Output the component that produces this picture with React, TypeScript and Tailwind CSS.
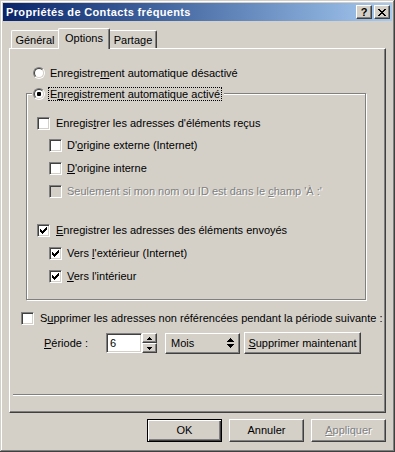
import React from "react";

const raised =
  "border border-t-white border-l-white border-r-[#404040] border-b-[#404040] shadow-[inset_-1px_-1px_0_#808080] bg-[#d4d0c8]";

function CheckMark() {
  return (
    <svg width="7" height="7" viewBox="0 0 7 7" shapeRendering="crispEdges">
      <path
        d="M0 2h1v3H0z M1 3h1v3H1z M2 4h1v3H2z M3 3h1v3H3z M4 2h1v3H4z M5 1h1v3H5z M6 0h1v3H6z"
        fill="#000"
      />
    </svg>
  );
}

function Check({ checked = false, disabled = false }: { checked?: boolean; disabled?: boolean }) {
  return (
    <div
      className={
        "w-[13px] h-[13px] shrink-0 border border-t-[#808080] border-l-[#808080] border-r-white border-b-white shadow-[inset_1px_1px_0_#404040,inset_-1px_-1px_0_#d4d0c8] flex items-center justify-center " +
        (disabled ? "bg-[#d4d0c8]" : "bg-white")
      }
    >
      {checked && <CheckMark />}
    </div>
  );
}

function Radio({ checked = false }: { checked?: boolean }) {
  return (
    <div className="w-[12px] h-[12px] shrink-0 rounded-full border border-t-[#808080] border-l-[#808080] border-r-white border-b-white">
      <div className="w-full h-full rounded-full border border-t-[#404040] border-l-[#404040] border-r-[#d4d0c8] border-b-[#d4d0c8] bg-white flex items-center justify-center">
        {checked && <div className="w-[4px] h-[4px] rounded-[1px] bg-black" />}
      </div>
    </div>
  );
}

function CheckRow({
  ml,
  mt,
  checked,
  disabled,
  gap,
  children,
}: {
  ml: string;
  mt: string;
  checked?: boolean;
  disabled?: boolean;
  gap: string;
  children: React.ReactNode;
}) {
  return (
    <div className={"flex items-center h-[16px] " + ml + " " + mt}>
      <Check checked={checked} disabled={disabled} />
      <span
        className={
          gap +
          " whitespace-nowrap " +
          (disabled ? "text-[#808080] [text-shadow:1px_1px_0_#fff]" : "text-black")
        }
      >
        {children}
      </span>
    </div>
  );
}

export default function App() {
  return (
    <div className="w-[395px] h-[452px] bg-[#d4d0c8] p-[3px] shadow-[inset_-1px_-1px_0_#404040,inset_1px_1px_0_#d4d0c8,inset_-2px_-2px_0_#808080,inset_2px_2px_0_#fff] font-['Liberation_Sans',Arial,sans-serif] text-[11px] leading-[13px] text-black flex flex-col select-none">
      {/* Title bar */}
      <div className="h-[18px] bg-linear-to-r from-[#0a246a] to-[#a6caf0] flex items-center justify-between pl-[3px] pr-[2px] shrink-0">
        <span className="text-white font-bold text-[11px] tracking-[0.35px] whitespace-nowrap">Propriétés de Contacts fréquents</span>
        <div className="flex gap-[2px]">
          <div className={"w-[16px] h-[14px] flex items-center justify-center font-bold text-[11px] leading-none " + raised}>
            ?
          </div>
          <div className={"w-[16px] h-[14px] flex items-center justify-center " + raised}>
            <svg width="8" height="7" viewBox="0 0 8 7" shapeRendering="crispEdges">
              <path
                d="M0 0h2v1H0z M6 0h2v1H6z M1 1h2v1H1z M5 1h2v1H5z M2 2h4v1H2z M3 3h2v1H3z M2 4h4v1H2z M1 5h2v1H1z M5 5h2v1H5z M0 6h2v1H0z M6 6h2v1H6z"
                fill="#000"
              />
            </svg>
          </div>
        </div>
      </div>

      {/* Tabs */}
      <div className="mt-[7px] ml-[8px] h-[20px] flex items-end shrink-0">
        <div className="w-[47px] h-[18px] rounded-tl-[2px] border-l border-t border-l-white border-t-white flex items-center justify-center pt-[1px]">
          Général
        </div>
        <div className="relative z-10 w-[52px] h-[21px] -mb-px bg-[#d4d0c8] rounded-t-[2px] border-l border-t border-r border-l-white border-t-white border-r-[#404040] shadow-[inset_-1px_0_0_#808080] flex items-start justify-center pt-[3px]">
          Options
        </div>
        <div className="w-[47px] h-[18px] rounded-tr-[2px] border-t border-r border-t-white border-r-[#404040] shadow-[inset_-1px_0_0_#808080] flex items-center justify-center pt-[1px]">
          Partage
        </div>
      </div>

      {/* Panel */}
      <div className="ml-[6px] w-[377px] h-[365px] shrink-0 border border-l-white border-t-white border-r-[#404040] border-b-[#404040] shadow-[inset_-1px_-1px_0_#808080] flex flex-col">
        <div className="mt-[16px] ml-[23px] h-[16px] flex items-center">
          <Radio />
          <span className="ml-[5px] whitespace-nowrap">
            Enregistre<u>m</u>ent automatique désactivé
          </span>
        </div>

        {/* Group box */}
        <div className="mt-[12px] ml-[16px] w-[340px] h-[207px] border border-[#808080] shadow-[1px_1px_0_#fff,inset_1px_1px_0_#fff] flex flex-col">
          <div className="-mt-[8px] ml-[5px] self-start h-[16px] bg-[#d4d0c8] flex items-center pl-[1px] pr-[2px]">
            <Radio checked />
            <span className="ml-[3px] border border-dotted border-black px-[1px] leading-[12px] whitespace-nowrap">
              E<u>n</u>registrement automatique activé
            </span>
          </div>

          <CheckRow ml="ml-[10px]" mt="mt-[13px]" gap="ml-[6px]">
            Enregis<u>t</u>rer les adresses d'éléments reçus
          </CheckRow>
          <CheckRow ml="ml-[22px]" mt="mt-[6px]" gap="ml-[5px]">
            D'<u>o</u>rigine externe (Internet)
          </CheckRow>
          <CheckRow ml="ml-[22px]" mt="mt-[7px]" gap="ml-[5px]">
            <u>D</u>'origine interne
          </CheckRow>
          <CheckRow ml="ml-[22px]" mt="mt-[7px]" gap="ml-[5px]" disabled>
            Seulement si mon nom ou ID est dans le <u>c</u>hamp 'À :'
          </CheckRow>
          <CheckRow ml="ml-[10px]" mt="mt-[23px]" gap="ml-[6px]" checked>
            <u>E</u>nregistrer les adresses des éléments envoyés
          </CheckRow>
          <CheckRow ml="ml-[22px]" mt="mt-[7px]" gap="ml-[5px]" checked>
            Vers <u>l</u>'extérieur (Internet)
          </CheckRow>
          <CheckRow ml="ml-[22px]" mt="mt-[7px]" gap="ml-[5px]" checked>
            <u>V</u>ers l'intérieur
          </CheckRow>
        </div>

        <CheckRow ml="ml-[11px]" mt="mt-[10px]" gap="ml-[6px]">
          S<u>u</u>pprimer les adresses non référencées pendant la période suivante :
        </CheckRow>

        {/* Période row */}
        <div className="mt-[6px] ml-[34px] h-[22px] flex items-center">
          <span className="w-[62px] whitespace-nowrap">
            <u>P</u>ériode :
          </span>
          <div className="w-[36px] h-[20px] border border-t-[#808080] border-l-[#808080] border-r-white border-b-white shadow-[inset_1px_1px_0_#404040,inset_-1px_-1px_0_#d4d0c8] bg-white flex items-center pl-[3px]">
            6
          </div>
          <div className="w-[15px] h-[20px] flex flex-col">
            <div className={"h-[10px] flex items-center justify-center " + raised}>
              <svg width="5" height="3" viewBox="0 0 5 3" shapeRendering="crispEdges">
                <path d="M2 0h1v1H2z M1 1h3v1H1z M0 2h5v1H0z" fill="#000" />
              </svg>
            </div>
            <div className={"h-[10px] flex items-center justify-center " + raised}>
              <svg width="5" height="3" viewBox="0 0 5 3" shapeRendering="crispEdges">
                <path d="M0 0h5v1H0z M1 1h3v1H1z M2 2h1v1H2z" fill="#000" />
              </svg>
            </div>
          </div>
          <div className={"ml-[8px] w-[75px] h-[21px] flex items-center justify-between pl-[5px] pr-[5px] " + raised}>
            <span>Mois</span>
            <svg width="7" height="11" viewBox="0 0 7 11" shapeRendering="crispEdges">
              <path d="M3 0h1v1H3z M2 1h3v1H2z M1 2h5v1H1z M0 3h7v1H0z M0 6h7v1H0z M1 7h5v1H1z M2 8h3v1H2z M3 9h1v1H3z" fill="#000" />
            </svg>
          </div>
          <div className={"ml-[4px] w-[117px] h-[22px] flex items-center justify-center " + raised}>
            <span className="whitespace-nowrap">
              <u>S</u>upprimer maintenant
            </span>
          </div>
        </div>

        {/* separator */}
        <div className="mt-[40px] ml-[3px] w-[369px] h-[2px] border-t border-b border-t-[#808080] border-b-white" />
      </div>

      {/* Bottom buttons */}
      <div className="mt-[6px] flex justify-end gap-[7px] pr-[6px]">
        <div className="w-[75px] h-[23px] border border-black bg-[#d4d0c8] shadow-[inset_1px_1px_0_#fff,inset_-1px_-1px_0_#404040,inset_-2px_-2px_0_#808080] flex items-center justify-center">
          OK
        </div>
        <div className={"w-[75px] h-[23px] flex items-center justify-center " + raised}>Annuler</div>
        <div className={"w-[75px] h-[23px] flex items-center justify-center " + raised}>
          <span className="text-[#808080] [text-shadow:1px_1px_0_#fff]">
            <u>A</u>ppliquer
          </span>
        </div>
      </div>
    </div>
  );
}
